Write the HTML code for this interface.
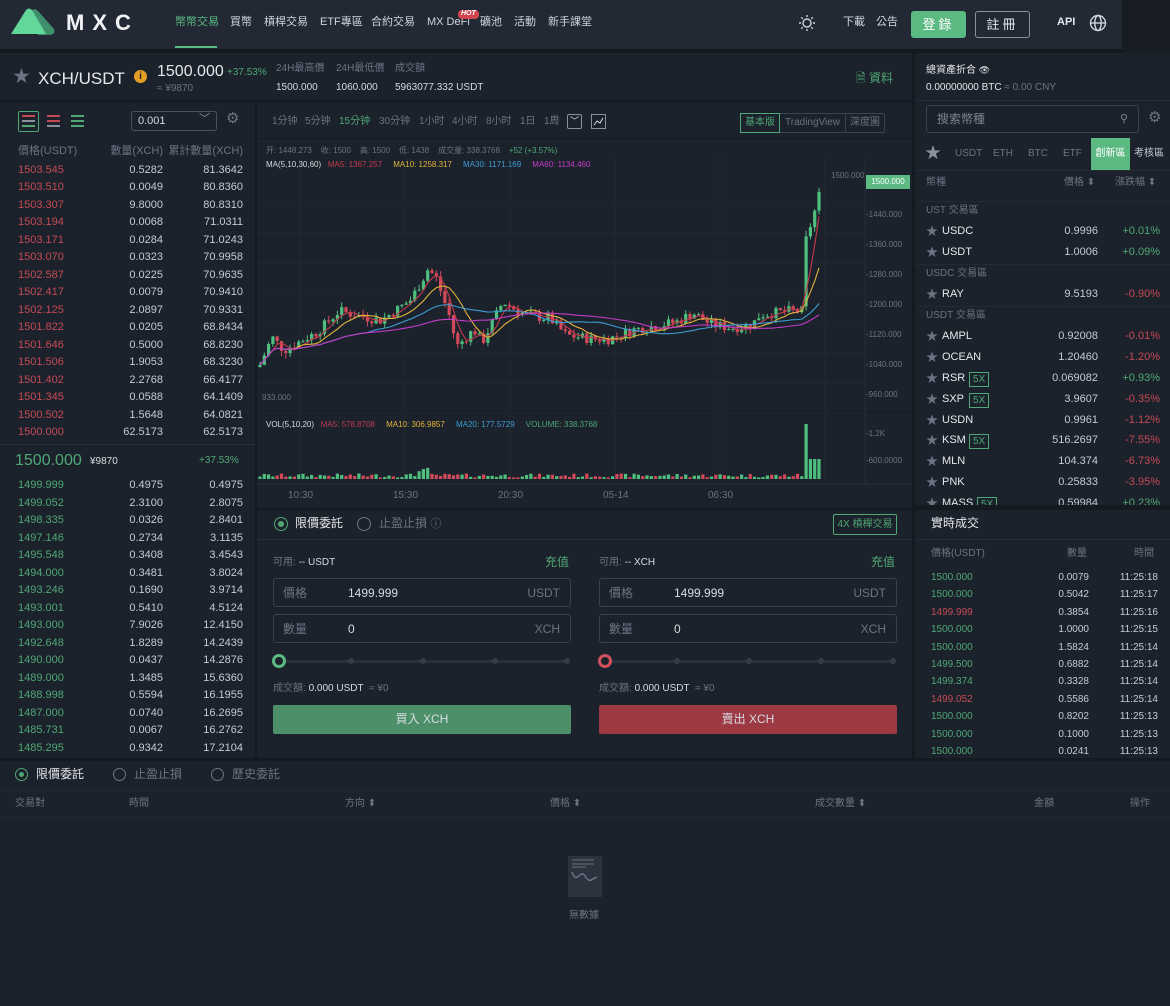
<!DOCTYPE html>
<html><head><meta charset="utf-8">
<style>
*{margin:0;padding:0;box-sizing:border-box}
body{width:1170px;height:1006px;background:#151a21;font-family:"Liberation Sans","Noto Sans CJK TC",sans-serif;color:#c5cad3;position:relative;overflow:hidden;font-size:11px;line-height:1.25}
.a{position:absolute;white-space:nowrap}
.p{position:absolute;background:#1c222b}
.g{color:#4fa775}.r{color:#c44a55}.m{color:#6b7383}
.row{position:absolute;left:0;width:255px;height:17px;font-size:11px}
.row span{position:absolute;top:0}
.ob .c1{left:18px}.ob .c2{right:92px}.ob .c3{right:12px}
.mk{position:absolute;left:915px;width:255px;height:21px;font-size:11px}
.mk span{position:absolute}
.star{color:#6c7484;left:11px;font-size:12px}
.x5{border:1px solid #4fa775;color:#4fa775;padding:0 3px;font-size:10px;line-height:13px;top:-1px}
.inp{position:absolute;border:1px solid #3a4250;border-radius:3px;height:29px;width:298px}
.inp span{position:absolute;top:6px;font-size:12px;line-height:16px}
.hd{color:#6b7383}
.tf{position:absolute;top:116px;font-size:10px;color:#6b7383}
</style></head><body>
<div class="p" style="left:0;top:0;width:1122px;height:49px;background:#222935"></div>
<div class="p" style="left:1122px;top:0;width:48px;height:53px;background:#181c23"></div>
<svg class="a" style="left:8px;top:6px" width="50" height="30" viewBox="0 0 50 30"><path d="M22 6 Q26 1 30 5 L46 23 Q48 29 40 29 L30 29 Z" fill="#3f8f6d"/><path d="M3 28 L18 4 Q21 1 24 4 L38 28 Z" fill="#62d79a"/></svg>
<div class="a" style="left:66px;top:9px;font-size:22px;font-weight:bold;letter-spacing:8px;color:#f0f2f5">MXC</div>
<div class="a" style="left:175px;top:16px;font-size:11px;color:#5bb982">幣幣交易</div>
<div class="a" style="left:175px;top:46px;width:42px;height:2px;background:#5bb982"></div>
<div class="a" style="left:230px;top:16px;font-size:11px;color:#d0d4db">買幣</div>
<div class="a" style="left:264px;top:16px;font-size:11px;color:#d0d4db">槓桿交易</div>
<div class="a" style="left:320px;top:16px;font-size:11px;color:#d0d4db">ETF專區</div>
<div class="a" style="left:371px;top:16px;font-size:11px;color:#d0d4db">合約交易</div>
<div class="a" style="left:427px;top:16px;font-size:11px;color:#d0d4db">MX DeFi</div>
<div class="a" style="left:458px;top:10px;font-size:7px;color:#fff;background:#d0454f;border-radius:4px;padding:0 3px;font-weight:bold;font-style:italic">HOT</div>
<div class="a" style="left:480px;top:16px;font-size:11px;color:#d0d4db">礦池</div>
<div class="a" style="left:514px;top:16px;font-size:11px;color:#d0d4db">活動</div>
<div class="a" style="left:548px;top:16px;font-size:11px;color:#d0d4db">新手課堂</div>
<svg class="a" style="left:798px;top:14px" width="18" height="18" viewBox="0 0 18 18" stroke="#d0d4db" fill="none" stroke-width="1.4"><circle cx="9" cy="9" r="4"/><path d="M9 1v2M9 15v2M1 9h2M15 9h2M3.3 3.3l1.4 1.4M13.3 13.3l1.4 1.4M3.3 14.7l1.4-1.4M13.3 4.7l1.4-1.4"/></svg>
<div class="a" style="left:843px;top:16px;color:#d0d4db">下載</div>
<div class="a" style="left:876px;top:16px;color:#d0d4db">公告</div>
<div class="a" style="left:911px;top:11px;width:55px;height:27px;background:#5bb982;border-radius:3px;color:#fff;font-size:13px;text-align:center;line-height:27px;letter-spacing:3px">登錄</div>
<div class="a" style="left:975px;top:11px;width:55px;height:27px;border:1px solid #8a919d;border-radius:3px;color:#e5e8ec;font-size:13px;text-align:center;line-height:25px;letter-spacing:3px">註冊</div>
<div class="a" style="left:1057px;top:16px;font-weight:bold;color:#e5e8ec">API</div>
<svg class="a" style="left:1089px;top:14px" width="18" height="18" viewBox="0 0 18 18" stroke="#d0d4db" fill="none" stroke-width="1.4"><circle cx="9" cy="9" r="7.5"/><ellipse cx="9" cy="9" rx="3.2" ry="7.5"/><path d="M1.5 9h15"/></svg>

<div class="p" style="left:0;top:53px;width:912px;height:47px"></div>
<div class="a" style="left:13px;top:66px;font-size:17px;color:#6c7484">★</div>
<div class="a" style="left:38px;top:68px;font-size:17px;color:#e5e8ec">XCH/USDT</div>
<div class="a" style="left:134px;top:70px;width:13px;height:13px;border-radius:50%;background:#e59d2a;color:#222;font-size:10px;font-weight:bold;text-align:center;line-height:13px">i</div>
<div class="a" style="left:157px;top:62px;font-size:16px;color:#e5e8ec">1500.000</div>
<div class="a g" style="left:227px;top:67px;font-size:10px">+37.53%</div>
<div class="a m" style="left:157px;top:83px;font-size:10px">≈ ¥9870</div>
<div class="a m" style="left:276px;top:63px;font-size:10px">24H最高價</div>
<div class="a m" style="left:336px;top:63px;font-size:10px">24H最低價</div>
<div class="a m" style="left:395px;top:63px;font-size:10px">成交額</div>
<div class="a" style="left:276px;top:82px;font-size:10px;color:#d7dbe1">1500.000</div>
<div class="a" style="left:336px;top:82px;font-size:10px;color:#d7dbe1">1060.000</div>
<div class="a" style="left:395px;top:82px;font-size:10px;color:#d7dbe1">5963077.332 USDT</div>
<div class="a g" style="left:856px;top:71px;font-size:12px">🗎 資料</div>

<div class="p ob" style="left:0;top:102px;width:255px;height:656px">
<div class="a" style="left:18px;top:9px;width:21px;height:21px;border:1px solid #4fa775;border-radius:2px"></div>
<div class="a" style="left:22px;top:13px;width:13px;height:2px;background:#c44a55;box-shadow:0 5px 0 #8a919d,0 10px 0 #4fa775"></div>
<div class="a" style="left:47px;top:13px;width:13px;height:2px;background:#c44a55;box-shadow:0 5px 0 #c44a55,0 10px 0 #8a919d"></div>
<div class="a" style="left:71px;top:13px;width:13px;height:2px;background:#4fa775;box-shadow:0 5px 0 #4fa775,0 10px 0 #4fa775"></div>
<div class="a" style="left:131px;top:9px;width:86px;height:20px;border:1px solid #4a5260;border-radius:3px;font-size:11px;padding:3px 6px;color:#d7dbe1">0.001<span style="position:absolute;right:6px;top:1px;color:#8a919d">﹀</span></div>
<div class="a" style="left:226px;top:8px;font-size:15px;color:#6c7484">⚙</div>
<div class="a hd" style="left:18px;top:43px">價格(USDT)</div>
<div class="a hd" style="right:92px;top:43px">數量(XCH)</div>
<div class="a hd" style="right:12px;top:43px">累計數量(XCH)</div>
</div>
<div id="ob"></div>
<div class="a" style="left:0;top:444px;width:255px;height:1px;background:#2a313c"></div>
<div class="a g" style="left:15px;top:451px;font-size:16px">1500.000</div>
<div class="a" style="left:90px;top:456px;font-size:10px;color:#d7dbe1">¥9870</div>
<div class="a g" style="left:199px;top:455px;font-size:10px">+37.53%</div>

<div class="p" style="left:257px;top:102px;width:655px;height:406px"></div>
<div class="tf" style="left:272px">1分钟</div>
<div class="tf" style="left:305px">5分钟</div>
<div class="tf" style="left:339px;color:#4fa775">15分钟</div>
<div class="tf" style="left:379px">30分钟</div>
<div class="tf" style="left:419px">1小时</div>
<div class="tf" style="left:452px">4小时</div>
<div class="tf" style="left:486px">8小时</div>
<div class="tf" style="left:520px">1日</div>
<div class="tf" style="left:544px">1周</div>
<div class="a" style="left:567px;top:114px;width:15px;height:15px;border:1px solid #8a919d;border-radius:2px;color:#d7dbe1;font-size:9px;text-align:center;line-height:13px">﹀</div>
<svg class="a" style="left:591px;top:114px" width="15" height="15"><rect x=".5" y=".5" width="14" height="14" fill="none" stroke="#8a919d"/><path d="M3 11l3-4 3 2 3-5" stroke="#d7dbe1" fill="none"/></svg>
<div class="a" style="left:740px;top:113px;height:20px;border:1px solid #3a4250;border-radius:2px;font-size:10px;line-height:16px;display:flex">
<span style="border:1px solid #4fa775;color:#4fa775;padding:1px 4px;margin:-1px 0 -1px -1px">基本版</span><span class="m" style="padding:1px 5px;border-right:1px solid #3a4250">TradingView</span><span class="m" style="padding:1px 4px">深度圖</span></div>
<div class="a" style="left:257px;top:138px;width:655px;height:1px;background:#151a21"></div>
<svg class="a" style="left:257px;top:139px" width="655" height="370" id="ch"></svg>
<div class="a m" style="left:266px;top:146px;font-size:8px">开: 1448.273&nbsp;&nbsp;&nbsp; 收: 1500&nbsp;&nbsp;&nbsp; 高: 1500&nbsp;&nbsp;&nbsp; 低: 1438&nbsp;&nbsp;&nbsp; 成交量: 338.3768&nbsp;&nbsp;&nbsp; <span class="g">+52 (+3.57%)</span></div>
<div class="a" style="left:266px;top:160px;font-size:8px;color:#d7dbe1">MA(5,10,30,60)&nbsp;&nbsp; <span style="color:#c33a4e">MA5: 1367.257</span>&nbsp;&nbsp;&nbsp;&nbsp; <span style="color:#e0b33a">MA10: 1258.317</span>&nbsp;&nbsp;&nbsp;&nbsp; <span style="color:#3c9bd3">MA30: 1171.169</span>&nbsp;&nbsp;&nbsp;&nbsp; <span style="color:#c43bc9">MA60: 1134.460</span></div>
<div class="a" style="left:266px;top:420px;font-size:8px;color:#d7dbe1">VOL(5,10,20)&nbsp;&nbsp; <span style="color:#c33a4e">MA5: 578.8708</span>&nbsp;&nbsp;&nbsp;&nbsp; <span style="color:#e0b33a">MA10: 306.9857</span>&nbsp;&nbsp;&nbsp;&nbsp; <span style="color:#3c9bd3">MA20: 177.5729</span>&nbsp;&nbsp;&nbsp;&nbsp; <span style="color:#4fa775">VOLUME: 338.3768</span></div>
<div class="a m" style="left:262px;top:393px;font-size:8px">933.000</div>
<div class="a m" style="left:831px;top:171px;font-size:8px">1500.000</div>
<div class="a" style="left:866px;top:175px;width:44px;height:14px;background:#5bb982;color:#fff;font-size:8px;line-height:14px;text-align:center">1500.000</div>
<div class="a m" style="left:866px;top:200px;font-size:8px;line-height:30px">-1440.000<br>-1360.000<br>-1280.000<br>-1200.000<br>-1120.000<br>-1040.000<br>-960.000</div>
<div class="a m" style="left:866px;top:420px;font-size:8px;line-height:27px">-1.2K<br>-600.0000</div>
<div class="a m" style="left:288px;top:490px;font-size:10px">10:30</div>
<div class="a m" style="left:393px;top:490px;font-size:10px">15:30</div>
<div class="a m" style="left:498px;top:490px;font-size:10px">20:30</div>
<div class="a m" style="left:603px;top:490px;font-size:10px">05-14</div>
<div class="a m" style="left:708px;top:490px;font-size:10px">06:30</div>

<div class="p" style="left:257px;top:510px;width:655px;height:248px"></div>
<div class="a" style="left:274px;top:517px;width:14px;height:14px;border:1px solid #4fa775;border-radius:50%"></div>
<div class="a" style="left:278px;top:521px;width:6px;height:6px;background:#4fa775;border-radius:50%"></div>
<div class="a" style="left:295px;top:516px;font-size:12px;color:#e5e8ec">限價委託</div>
<div class="a" style="left:357px;top:517px;width:14px;height:14px;border:1px solid #6c7484;border-radius:50%"></div>
<div class="a m" style="left:379px;top:516px;font-size:12px">止盈止損 <span style="font-size:11px">ⓘ</span></div>
<div class="a g" style="left:833px;top:514px;width:64px;height:21px;border:1px solid #4fa775;border-radius:2px;font-size:10px;text-align:center;line-height:19px">4X 槓桿交易</div>
<div class="a" style="left:257px;top:539px;width:655px;height:1px;background:#262d38"></div>
<div id="forms"></div>

<div class="p" style="left:915px;top:53px;width:255px;height:455px"></div>
<div class="a" style="left:926px;top:65px;font-size:10px;color:#e5e8ec">總資產折合 <span style="font-size:9px">👁</span></div>
<div class="a" style="left:926px;top:82px;font-size:10px;color:#e5e8ec">0.00000000 BTC <span class="m">≈ 0.00 CNY</span></div>
<div class="a" style="left:915px;top:100px;width:255px;height:1px;background:#262d38"></div>
<div class="a" style="left:926px;top:105px;width:213px;height:28px;border:1px solid #3a4250;border-radius:3px;font-size:12px;line-height:16px;color:#7b8392;padding:5px 10px">搜索幣種<span style="position:absolute;right:10px;top:5px;font-size:11px">⚲</span></div>
<div class="a" style="left:1148px;top:109px;font-size:15px;color:#6c7484">⚙</div>
<div class="a" style="left:925px;top:144px;font-size:16px;color:#8a919d">★</div>
<div class="a m" style="left:955px;top:148px;font-size:10px">USDT</div>
<div class="a m" style="left:993px;top:148px;font-size:10px">ETH</div>
<div class="a m" style="left:1028px;top:148px;font-size:10px">BTC</div>
<div class="a m" style="left:1063px;top:148px;font-size:10px">ETF</div>
<div class="a" style="left:1091px;top:138px;width:39px;height:32px;background:#5bb982;color:#fff;font-size:10px;line-height:32px;text-align:center">創新區</div>
<div class="a" style="left:1134px;top:148px;font-size:10px;color:#c5cad3">考核區</div>
<div class="a" style="left:915px;top:170px;width:255px;height:1px;background:#262d38"></div>
<div class="a m" style="left:926px;top:177px;font-size:10px">幣種</div>
<div class="a m" style="left:1064px;top:177px;font-size:10px">價格 ⬍</div>
<div class="a m" style="left:1115px;top:177px;font-size:10px">漲跌幅 ⬍</div>
<div id="mk"></div>

<div class="p" style="left:915px;top:510px;width:255px;height:248px"></div>
<div class="a" style="left:931px;top:516px;font-size:12px;color:#e5e8ec">實時成交</div>
<div class="a" style="left:915px;top:539px;width:255px;height:1px;background:#262d38"></div>
<div class="a hd" style="left:931px;top:548px;font-size:10px">價格(USDT)</div>
<div class="a hd" style="left:1067px;top:548px;font-size:10px">數量</div>
<div class="a hd" style="left:1134px;top:548px;font-size:10px">時間</div>
<div id="tr"></div>

<div class="p" style="left:0;top:761px;width:1170px;height:245px"></div>
<div class="a" style="left:15px;top:768px;width:13px;height:13px;border:1px solid #4fa775;border-radius:50%"></div>
<div class="a" style="left:19px;top:772px;width:5px;height:5px;background:#4fa775;border-radius:50%"></div>
<div class="a" style="left:36px;top:767px;font-size:12px;color:#e5e8ec">限價委託</div>
<div class="a" style="left:113px;top:768px;width:13px;height:13px;border:1px solid #6c7484;border-radius:50%"></div>
<div class="a m" style="left:134px;top:767px;font-size:12px">止盈止損</div>
<div class="a" style="left:211px;top:768px;width:13px;height:13px;border:1px solid #6c7484;border-radius:50%"></div>
<div class="a m" style="left:232px;top:767px;font-size:12px">歷史委託</div>
<div class="a" style="left:0;top:790px;width:1170px;height:1px;background:#232a34"></div>
<div class="a" style="left:0;top:817px;width:1170px;height:1px;background:#232a34"></div>
<div class="a m" style="left:15px;top:798px;font-size:10px">交易對</div>
<div class="a m" style="left:129px;top:798px;font-size:10px">時間</div>
<div class="a m" style="left:345px;top:798px;font-size:10px">方向 ⬍</div>
<div class="a m" style="left:550px;top:798px;font-size:10px">價格 ⬍</div>
<div class="a m" style="left:815px;top:798px;font-size:10px">成交數量 ⬍</div>
<div class="a m" style="left:1034px;top:798px;font-size:10px">金額</div>
<div class="a m" style="left:1130px;top:798px;font-size:10px">操作</div>
<svg class="a" style="left:567px;top:856px" width="36" height="42"><rect x="1" y="0" width="34" height="41" fill="#2c323e"/><path d="M5 4h22M5 8h22M5 11h14" stroke="#4a515e" stroke-width="2"/><path d="M5 16c5 14 8 -4 13 4s6 3 12 1" stroke="#6c7484" fill="none" stroke-width="1.5"/></svg>
<div class="a m" style="left:569px;top:910px;font-size:10px">無數據</div>

<script>
function h(id,s){document.getElementById(id).innerHTML=s}
var asks=[["1503.545","0.5282","81.3642"],["1503.510","0.0049","80.8360"],["1503.307","9.8000","80.8310"],["1503.194","0.0068","71.0311"],["1503.171","0.0284","71.0243"],["1503.070","0.0323","70.9958"],["1502.587","0.0225","70.9635"],["1502.417","0.0079","70.9410"],["1502.125","2.0897","70.9331"],["1501.822","0.0205","68.8434"],["1501.646","0.5000","68.8230"],["1501.506","1.9053","68.3230"],["1501.402","2.2768","66.4177"],["1501.345","0.0588","64.1409"],["1500.502","1.5648","64.0821"],["1500.000","62.5173","62.5173"]];
var bids=[["1499.999","0.4975","0.4975"],["1499.052","2.3100","2.8075"],["1498.335","0.0326","2.8401"],["1497.146","0.2734","3.1135"],["1495.548","0.3408","3.4543"],["1494.000","0.3481","3.8024"],["1493.246","0.1690","3.9714"],["1493.001","0.5410","4.5124"],["1493.000","7.9026","12.4150"],["1492.648","1.8289","14.2439"],["1490.000","0.0437","14.2876"],["1489.000","1.3485","15.6360"],["1488.998","0.5594","16.1955"],["1487.000","0.0740","16.2695"],["1485.731","0.0067","16.2762"],["1485.295","0.9342","17.2104"]];
var s="";
asks.forEach(function(r,i){s+='<div class="row ob" style="top:'+(164+i*17.47)+'px"><span class="c1 r">'+r[0]+'</span><span class="c2">'+r[1]+'</span><span class="c3">'+r[2]+'</span></div>'});
bids.forEach(function(r,i){s+='<div class="row ob" style="top:'+(479+i*17.53)+'px"><span class="c1 g">'+r[0]+'</span><span class="c2">'+r[1]+'</span><span class="c3">'+r[2]+'</span></div>'});
h("ob",s);
var mk=[["s","UST 交易區"],["USDC","0.9996","+0.01%"],["USDT","1.0006","+0.09%"],["s","USDC 交易區"],["RAY","9.5193","-0.90%"],["s","USDT 交易區"],["AMPL","0.92008","-0.01%"],["OCEAN","1.20460","-1.20%"],["RSR","0.069082","+0.93%",1],["SXP","3.9607","-0.35%",1],["USDN","0.9961","-1.12%"],["KSM","516.2697","-7.55%",1],["MLN","104.374","-6.73%"],["PNK","0.25833","-3.95%"],["MASS","0.59984","+0.23%",1]];
s="";
mk.forEach(function(r,i){var t=201+i*20.95;
if(r[0]=="s"){s+='<div class="mk" style="top:'+t+'px;border-top:1px solid #232a34"><span class="m" style="left:11px;top:3px;font-size:10px">'+r[1]+'</span></div>';return}
s+='<div class="mk" style="top:'+t+'px"><span class="star" style="top:2px">★</span><span style="left:27px;top:3px;color:#e5e8ec">'+r[0]+'</span>'+(r[3]?'<span class="x5" style="left:'+(30+r[0].length*8)+'px;top:3px">5X</span>':'')+'<span style="right:72px;top:3px">'+r[1]+'</span><span class="'+(r[2][0]=="+"?"g":"r")+'" style="right:10px;top:3px">'+r[2]+'</span></div>'});
h("mk",s+'<div class="a" style="left:915px;top:505px;width:255px;height:5px;background:#151a21"></div>');
var tr=[["1500.000","0.0079","11:25:18"],["1500.000","0.5042","11:25:17"],["1499.999","0.3854","11:25:16",1],["1500.000","1.0000","11:25:15"],["1500.000","1.5824","11:25:14"],["1499.500","0.6882","11:25:14"],["1499.374","0.3328","11:25:14"],["1499.052","0.5586","11:25:14",1],["1500.000","0.8202","11:25:13"],["1500.000","0.1000","11:25:13"],["1500.000","0.0241","11:25:13"]];
s="";
tr.forEach(function(r,i){var t=572+i*17.4;s+='<div class="mk" style="top:'+t+'px;height:'+(i==10?'13':'17')+'px;overflow:hidden"><span class="'+(r[3]?"r":"g")+'" style="left:16px;top:0;font-size:10px">'+r[0]+'</span><span style="right:81px;top:0;font-size:10px">'+r[1]+'</span><span style="right:12px;top:0;font-size:10px">'+r[2]+'</span></div>'});
h("tr",s);
s="";
[[273,"USDT","充值","買入 XCH","#4c8f68","#5bb982"],[599,"XCH","充值","賣出 XCH","#9c3943","#d0505b"]].forEach(function(f){var x=f[0];
s+='<div class="a m" style="left:'+x+'px;top:557px;font-size:10px">可用: <span style="color:#d7dbe1">-- '+f[1]+'</span></div>';
s+='<div class="a g" style="left:'+(x+272)+'px;top:555px;font-size:12px">'+f[2]+'</div>';
s+='<div class="inp" style="left:'+x+'px;top:578px"><span class="m" style="left:9px">價格</span><span style="left:74px;color:#d7dbe1">1499.999</span><span class="m" style="right:10px">USDT</span></div>';
s+='<div class="inp" style="left:'+x+'px;top:614px"><span class="m" style="left:9px">數量</span><span style="left:74px;color:#d7dbe1">0</span><span class="m" style="right:10px">XCH</span></div>';
s+='<div class="a" style="left:'+(x+6)+'px;top:660px;width:290px;height:3px;background:#2a313c"></div>';
for(var k=1;k<5;k++)s+='<div class="a" style="left:'+(x+3+k*72)+'px;top:658px;width:6px;height:6px;border-radius:50%;background:#343c48"></div>';
s+='<div class="a" style="left:'+(x-1)+'px;top:654px;width:14px;height:14px;border-radius:50%;border:3px solid '+f[5]+';background:#1c222b"></div>';
s+='<div class="a m" style="left:'+x+'px;top:683px;font-size:10px">成交額: <span style="color:#d7dbe1">0.000 USDT</span>&nbsp; ≈ ¥0</div>';
s+='<div class="a" style="left:'+x+'px;top:705px;width:298px;height:29px;background:'+f[4]+';border-radius:2px;color:#d8dde3;font-size:12px;text-align:center;line-height:29px">'+f[3]+'</div>';
});
h("forms",s);
var svg="";
function Y(p){return 34+(1520-p)*0.373}
var key=[[2,1000],[15,1080],[27,1045],[61,1095],[82,1150],[124,1125],[154,1180],[171,1262],[179,1240],[192,1140],[200,1055],[217,1100],[225,1065],[246,1175],[267,1140],[293,1130],[309,1085],[335,1075],[352,1075],[377,1100],[419,1120],[436,1145],[453,1115],[474,1105],[495,1112],[503,1140],[533,1150],[545,1150],[549,1340],[558,1420],[566,1500]];
function interp(x){for(var i=0;i<key.length-1;i++){if(x>=key[i][0]&&x<=key[i+1][0]){var t=(x-key[i][0])/(key[i+1][0]-key[i][0]);return key[i][1]+t*(key[i+1][1]-key[i][1])}}return 1500}
var seed=7;function rnd(){seed=(seed*9301+49297)%233280;return seed/233280}
var prev=interp(2),closes=[];
for(var x=3;x<=566;x+=4.3){var c=interp(x)+(rnd()-.5)*28;var o=prev;var hi=Math.max(o,c)+rnd()*15,lo=Math.min(o,c)-rnd()*15;var col=c>=o?"#4fbf7f":"#d2495a";
svg+='<line x1="'+x+'" x2="'+x+'" y1="'+Y(hi)+'" y2="'+Y(lo)+'" stroke="'+col+'" stroke-width="1"/><rect x="'+(x-1.6)+'" y="'+Math.min(Y(o),Y(c))+'" width="3.2" height="'+Math.max(1,Math.abs(Y(o)-Y(c)))+'" fill="'+col+'"/>';
var v=(rnd()*4+1.5)+(x>160&&x<175?6:0);if(x>548)v=20;if(x>547&&x<552)v=55;
svg+='<rect x="'+(x-1.6)+'" y="'+(340-v)+'" width="3.2" height="'+v+'" fill="'+col+'"/>';
closes.push([x,c]);prev=c}
function ma(n,cl){var pts=[];for(var i=0;i<closes.length;i++){var a=0,m=0;for(var j=Math.max(0,i-n+1);j<=i;j++){a+=closes[j][1];m++}pts.push(closes[i][0]+","+Y(a/m))}return '<polyline fill="none" stroke="'+cl+'" stroke-width="1.1" points="'+pts.join(" ")+'"/>'}
svg=svg+ma(4,"#c33a4e")+ma(9,"#e0b33a")+ma(26,"#3c9bd3")+ma(50,"#c43bc9");
var grid="";for(var gy=64;gy<280;gy+=30)grid+='<line x1="0" x2="608" y1="'+gy+'" y2="'+gy+'" stroke="#212833"/>';
for(var gx=43;gx<600;gx+=105)grid+='<line x1="'+gx+'" x2="'+gx+'" y1="20" y2="345" stroke="#212833"/>';
grid+='<line x1="0" x2="655" y1="273" y2="273" stroke="#161b22"/><line x1="608" x2="608" y1="20" y2="345" stroke="#262d38"/><line x1="0" x2="655" y1="345" y2="345" stroke="#262d38"/>';
document.getElementById("ch").innerHTML=grid+svg;
</script>
</body></html>
